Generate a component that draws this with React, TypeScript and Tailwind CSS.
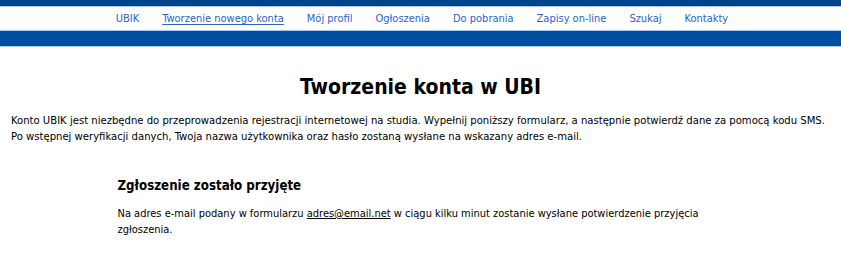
import React from "react";

const navItems = [
  { label: "UBIK", active: false },
  { label: "Tworzenie nowego konta", active: true },
  { label: "Mój profil", active: false },
  { label: "Ogłoszenia", active: false },
  { label: "Do pobrania", active: false },
  { label: "Zapisy on-line", active: false },
  { label: "Szukaj", active: false },
  { label: "Kontakty", active: false },
];

export default function App() {
  return (
    <div className="min-h-screen bg-white text-black font-['DejaVu_Sans_Condensed','Liberation_Sans',sans-serif]">
      {/* Header */}
      <div className="h-[6px] bg-[#00448e]" />
      <div className="h-px bg-[#a9c6ec]" />
      <nav className="h-[23px] flex items-center justify-center gap-[23px] pt-[2px] pl-[3px] text-[11px] text-[#2a62c9]">
        {navItems.map((item) => (
          <a
            key={item.label}
            href="#"
            className={item.active ? "underline underline-offset-2" : "no-underline"}
          >
            {item.label}
          </a>
        ))}
      </nav>
      <div className="h-px bg-[#a9c6ec]" />
      <div className="h-[15px] bg-[#004ea2]" />
      <div className="h-px bg-[#a9c6ec]" />

      {/* Content */}
      <div className="px-[11px]">
        <h1 className="mt-[25px] text-center text-[21px] font-bold leading-[30px]">
          Tworzenie konta w UBI
        </h1>
        <p className="mt-[11px] text-[11.2px] leading-[16px]">
          Konto UBIK jest niezbędne do przeprowadzenia rejestracji internetowej na studia. Wypełnij poniższy formularz, a następnie potwierdź dane za pomocą kodu SMS.
          <br />
          Po wstępnej weryfikacji danych, Twoja nazwa użytkownika oraz hasło zostaną wysłane na wskazany adres e-mail.
        </p>

        <div className="mx-auto mt-[32px] w-[606px]">
          <h2 className="text-[13.2px] font-semibold leading-[18px]">Zgłoszenie zostało przyjęte</h2>
          <p className="mt-[11px] text-[11px] leading-[16px]">
            Na adres e-mail podany w formularzu{" "}
            <a href="#" className="underline text-black">
              adres@email.net
            </a>{" "}
            w ciągu kilku minut zostanie wysłane potwierdzenie przyjęcia
            <br />
            zgłoszenia.
          </p>
        </div>
      </div>
    </div>
  );
}
